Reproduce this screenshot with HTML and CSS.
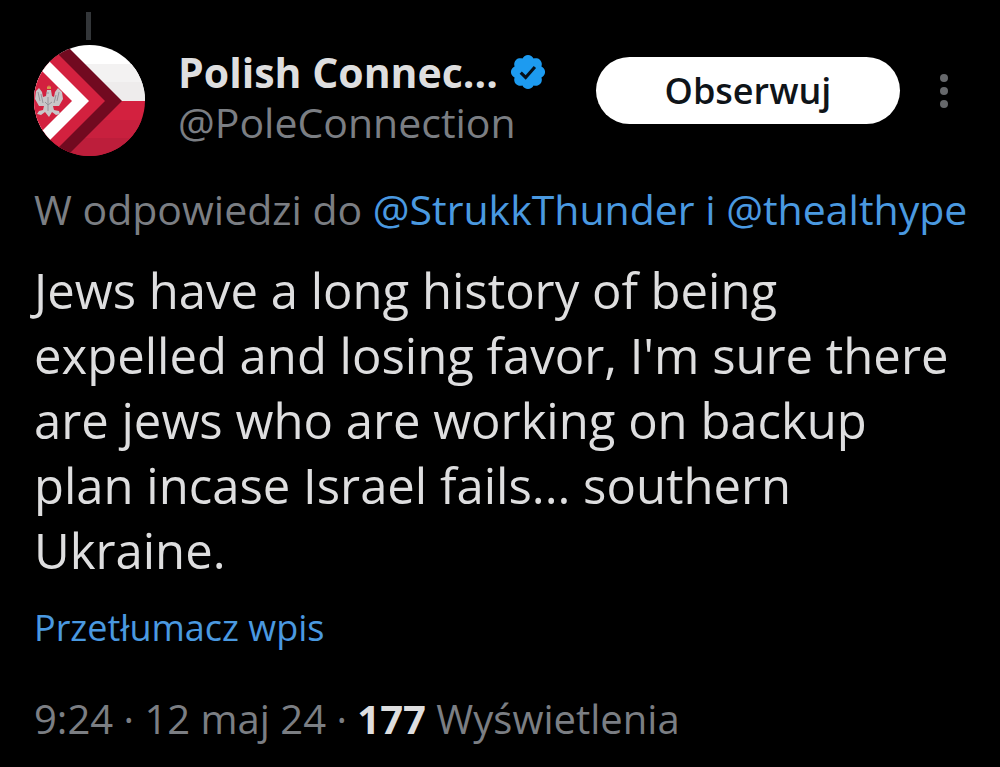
FILE: index.html
```html
<!DOCTYPE html>
<html lang="pl">
<head>
    <meta charset="UTF-8">
    <meta name="viewport" content="width=device-width, initial-scale=1.0">
    <title>Wpis</title>
    <link rel="stylesheet" href="styles.css">
</head>
<body>
    <article class="post">
        <div class="thread-line"></div>
        <header class="post-header">
            <svg class="avatar" viewBox="0 0 111 111" aria-hidden="true">
                <defs>
                    <clipPath id="circle"><circle cx="55.5" cy="55.5" r="55.5"/></clipPath>
                </defs>
                <g clip-path="url(#circle)">
                    <rect width="111" height="56" fill="#fff"/>
                    <rect y="19" width="111" height="18" fill="#f3f2f2"/>
                    <rect y="37" width="111" height="19" fill="#eeecec"/>
                    <rect y="56" width="111" height="55" fill="#d3213f"/>
                    <rect y="75" width="111" height="18" fill="#c8203e"/>
                    <rect y="93" width="111" height="18" fill="#bd1e3b"/>
                    <path d="M31 -1 L88 56 L31 113 L-5 113 L-5 -1 Z" fill="#720a20"/>
                    <path d="M14 -1 L71 56 L14 113 L-5 113 L-5 -1 Z" fill="#d3213f"/>
                    <path d="M0 1 L55 56 L0 111 Z" fill="#fff"/>
                    <path d="M-2 16 L38 56 L-2 96 Z" fill="#d3213f"/>
                    <!-- eagle -->
                    <path d="M13 45 L17 45 L18 51 L20 52 L21 47 L24 43 L28 47 L29 54 L25 61 L19 61 L20 65 L25 66 L26 69 L22 70 L18 67 L15 72 L11 67 L7 70 L3 69 L5 66 L9 65 L10 61 L5 61 L1 54 L2 46 L5 43 L8 47 L9 52 L12 51 Z" fill="#c9c6c8"/>
                    <path d="M4 47 L6 56 M7 49 L9 58 M25 47 L23 56 M22 50 L20 58 M14 52 V66 M11 57 L14 60 L18 57 M12 48 H15" fill="none" stroke="#96939a"/>
                    <path d="M13 41 L14 42 L15 40 L16 42 L17 41 L17 44 H13 Z" fill="#d69a4c"/>
                </g>
            </svg>
            <div class="author">
                <div class="name-row">
                    <span class="name">Polish Connec...</span>
                    <svg class="badge" viewBox="0 0 22 22" role="img" aria-label="Zweryfikowane konto">
                        <path fill="#1d9bf0" d="M20.396 11c-.018-.646-.215-1.275-.57-1.816-.354-.54-.852-.972-1.438-1.246.223-.607.27-1.264.14-1.897-.131-.634-.437-1.218-.882-1.687-.47-.445-1.053-.75-1.687-.882-.633-.13-1.29-.083-1.897.14-.273-.587-.704-1.086-1.245-1.44S11.647 1.62 11 1.604c-.646.017-1.273.213-1.813.568s-.969.854-1.24 1.44c-.608-.223-1.267-.272-1.902-.14-.635.13-1.22.436-1.69.882-.445.47-.749 1.055-.878 1.688-.13.633-.08 1.29.144 1.896-.587.274-1.087.705-1.443 1.245-.356.54-.555 1.17-.574 1.817.02.647.218 1.276.574 1.817.356.54.856.972 1.443 1.245-.224.606-.274 1.263-.144 1.896.13.634.433 1.218.877 1.688.47.443 1.054.747 1.687.878.633.132 1.29.084 1.897-.136.274.586.705 1.084 1.246 1.439.54.354 1.17.551 1.816.569.647-.016 1.276-.213 1.817-.567s.972-.854 1.245-1.44c.604.239 1.266.296 1.903.164.636-.132 1.22-.447 1.68-.907.46-.46.776-1.044.908-1.681s.075-1.299-.165-1.903c.586-.274 1.084-.705 1.439-1.246.354-.54.551-1.17.569-1.816z"/>
                        <path fill="none" stroke="#06101a" stroke-width="1.7" d="M7 11.4 L9.7 14 L14.8 8.2"/>
                    </svg>
                </div>
                <div class="handle">@PoleConnection</div>
            </div>
            <button class="follow" type="button">Obserwuj</button>
            <button class="more" type="button" aria-label="Więcej">
                <svg viewBox="0 0 8 34"><circle cx="4" cy="4" r="4"/><circle cx="4" cy="17" r="4"/><circle cx="4" cy="30" r="4"/></svg>
            </button>
        </header>
        <p class="reply-to">W odpowiedzi do <a href="#">@StrukkThunder i @thealthype</a></p>
        <p class="post-text">Jews have a long history of being expelled and losing favor, I'm sure there are jews who are working on backup plan incase Israel fails... southern Ukraine.</p>
        <a class="translate" href="#">Przetłumacz wpis</a>
        <footer class="meta">9:24 · 12 maj 24 · <strong>177</strong> Wyświetlenia</footer>
    </article>
</body>
</html>
```
FILE: styles.css
```css
body {
    margin: 0;
    background: #000;
    color: #dededf;
    font-family: "Open Sans", "Noto Sans", sans-serif;
}
a {
    color: #4a99e0;
    text-decoration: none;
}
button {
    border: none;
    padding: 0;
    font-family: inherit;
    cursor: pointer;
}
.post {
    padding: 12px 34px 16px;
}
.thread-line {
    width: 5px;
    height: 28px;
    margin-left: 52px;
    background: #333639;
}
.post-header {
    display: flex;
    align-items: center;
    margin-top: 5px;
}
.avatar {
    width: 111px;
    height: 111px;
    flex: none;
}
.author {
    flex: 1;
    min-width: 0;
    margin: 0 0 8px 33px;
    line-height: 50px;
    white-space: nowrap;
}
.name-row {
    display: flex;
    align-items: center;
}
.name {
    font-size: 41px;
    font-weight: 700;
}
.badge {
    width: 40px;
    height: 40px;
    margin-left: 10px;
}
.handle {
    color: #7b7e83;
    font-size: 41px;
}
.follow {
    width: 304px;
    height: 67px;
    margin-bottom: 20px;
    border-radius: 34px;
    background: #fff;
    color: #0f1419;
    font-size: 36px;
    font-weight: 600;
}
.more {
    display: flex;
    width: 8px;
    margin: 0 18px 20px 40px;
    background: none;
}
.more svg {
    width: 8px;
    height: 34px;
    fill: #66686b;
}
.reply-to {
    margin: 28px 0 0;
    color: #7b7e83;
    font-size: 41px;
    line-height: 50px;
    white-space: nowrap;
}
.post-text {
    margin: 24px 0 0;
    font-size: 49px;
    line-height: 65px;
}
.translate {
    display: inline-block;
    margin-top: 20px;
    font-size: 36px;
    line-height: 50px;
}
.meta {
    margin-top: 41px;
    color: #7b7e83;
    font-size: 40px;
    line-height: 50px;
}
.meta strong {
    color: #dededf;
}
```
